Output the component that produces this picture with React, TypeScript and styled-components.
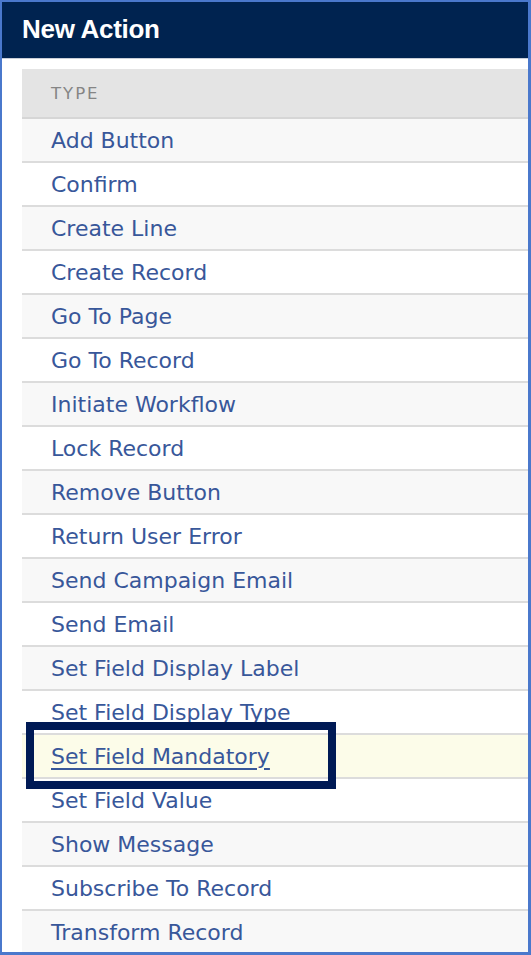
import styled, { createGlobalStyle } from 'styled-components';

const GlobalStyles = createGlobalStyle`
  html, body {
    margin: 0;
    padding: 0;
    background: #ffffff;
  }
  * {
    box-sizing: border-box;
  }
`;

const Frame = styled.div`
  height: 100vh;
  border: 2px solid #4a78cc;
  border-right-width: 3px;
  border-bottom-width: 3px;
  overflow: hidden;
  display: flex;
  flex-direction: column;
  background: #ffffff;
`;

const TitleBar = styled.div`
  height: 57px;
  flex-shrink: 0;
  background: #002350;
  border-bottom: 1px solid #c9ced8;
  display: flex;
  align-items: center;
  padding: 0 0 2px 20px;
`;

const Title = styled.h1`
  margin: 0;
  font-family: 'Liberation Sans', Arial, sans-serif;
  font-size: 26px;
  font-weight: 700;
  letter-spacing: -0.3px;
  color: #ffffff;
`;

const Body = styled.div`
  flex: 1;
  padding: 10px 0 0 20px;
  overflow: hidden;
`;

const Table = styled.table`
  width: 100%;
  border-collapse: collapse;
  font-family: 'DejaVu Sans', Verdana, sans-serif;
`;

const HeadCell = styled.th`
  height: 49px;
  padding: 0 0 0 29px;
  text-align: left;
  background: #e4e4e4;
  border-bottom: 2px solid #d6d6d6;
  font-size: 16.5px;
  font-weight: 400;
  letter-spacing: 2px;
  color: #858585;
`;

const Row = styled.tr<{ $striped: boolean; $active?: boolean }>`
  background: ${({ $striped, $active }) =>
    $active ? '#fcfce9' : $striped ? '#f8f8f8' : '#ffffff'};
`;

const Cell = styled.td`
  position: relative;
  height: 44px;
  padding: 1px 0 0 29px;
  border-bottom: 2px solid #dcdcdc;
  font-size: 22px;
  color: #38579a;
  white-space: nowrap;
`;

const Label = styled.span<{ $active?: boolean }>`
  text-decoration: ${({ $active }) => ($active ? 'underline' : 'none')};
  text-underline-offset: 4px;
  text-decoration-thickness: 2px;
`;

const Callout = styled.div`
  position: absolute;
  top: -13px;
  bottom: -12px;
  left: 4px;
  width: 310px;
  border: 8px solid #001a55;
  pointer-events: none;
`;

const actions = [
  'Add Button',
  'Confirm',
  'Create Line',
  'Create Record',
  'Go To Page',
  'Go To Record',
  'Initiate Workflow',
  'Lock Record',
  'Remove Button',
  'Return User Error',
  'Send Campaign Email',
  'Send Email',
  'Set Field Display Label',
  'Set Field Display Type',
  'Set Field Mandatory',
  'Set Field Value',
  'Show Message',
  'Subscribe To Record',
  'Transform Record',
];

const highlighted = 'Set Field Mandatory';

function App() {
  return (
    <>
      <GlobalStyles />
      <Frame>
        <TitleBar>
          <Title>New Action</Title>
        </TitleBar>
        <Body>
          <Table>
            <thead>
              <tr>
                <HeadCell>TYPE</HeadCell>
              </tr>
            </thead>
            <tbody>
              {actions.map((name, i) => {
                const active = name === highlighted;
                return (
                  <Row key={name} $striped={i % 2 === 0} $active={active}>
                    <Cell>
                      <Label $active={active}>{name}</Label>
                      {active && <Callout />}
                    </Cell>
                  </Row>
                );
              })}
            </tbody>
          </Table>
        </Body>
      </Frame>
    </>
  );
}

export default App;
